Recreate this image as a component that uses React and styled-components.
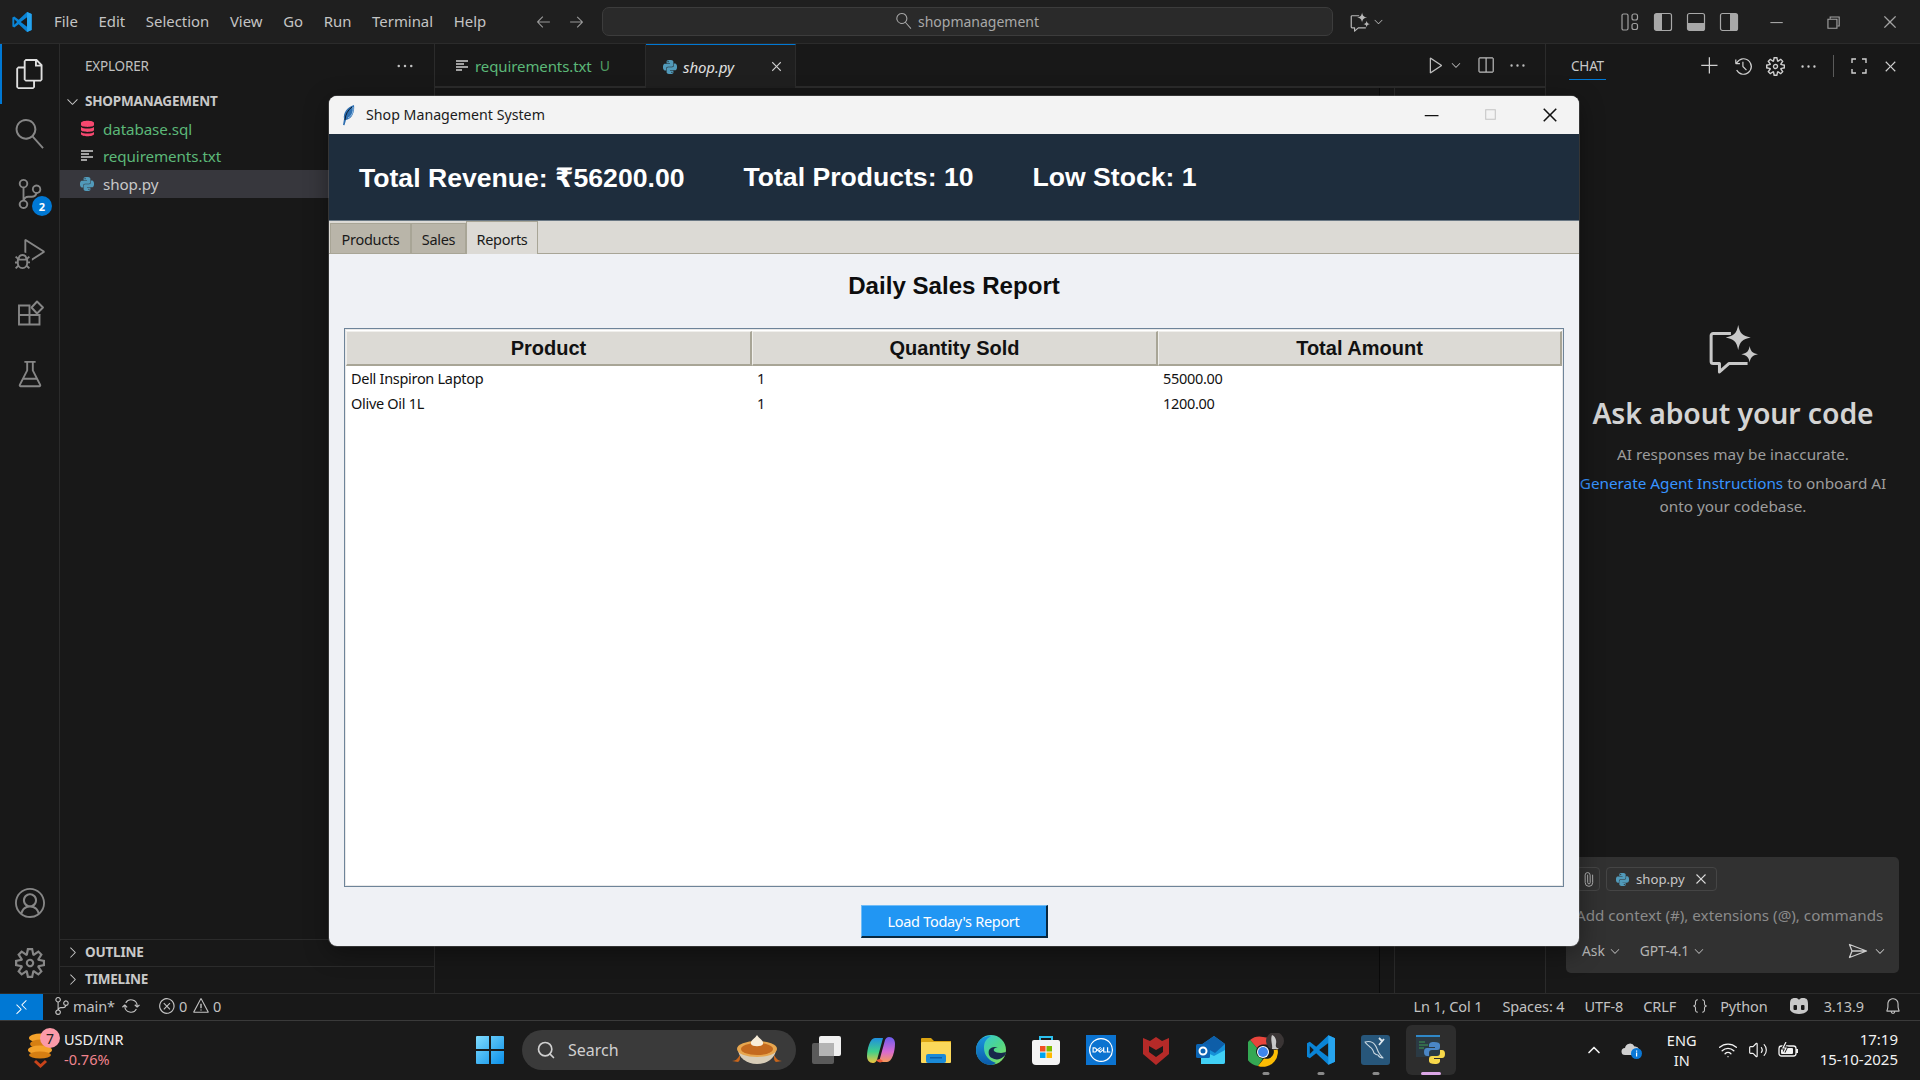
import React from "react";
import styled, { createGlobalStyle } from "styled-components";
import {
  VscFiles, VscSearch, VscSourceControl, VscDebugAlt, VscBeaker, VscAccount, VscSettingsGear,
  VscEllipsis, VscClose, VscChevronDown, VscChevronRight, VscPlay, VscSplitHorizontal, VscAdd, VscHistory,
  VscRemote, VscSync, VscError, VscWarning, VscBell, VscJson, VscArrowLeft, VscArrowRight,
  VscChromeMinimize, VscChromeRestore, VscChromeClose, VscChromeMaximize,
} from "react-icons/vsc";
import { SiPython, SiDell } from "react-icons/si";
import { Paperclip, Search as SearchIcon, ChevronUp, Wifi, Volume2 } from "lucide-react";

const Global = createGlobalStyle`
  html, body { margin: 0; padding: 0; background: #181818; }
  body { font-family: "Noto Sans", "Open Sans", sans-serif; overflow: hidden; }
  * { box-sizing: border-box; }
`;

const Screen = styled.div`
  position: relative; width: 1920px; height: 1080px; display: flex; flex-direction: column;
  background: #181818; color: #cccccc; overflow: hidden;
`;
const Flip = styled.span`display: flex; transform: scaleX(-1);`;

/* ---------- title bar ---------- */
const TitleBar = styled.header`
  height: 44px; flex: none; display: flex; align-items: center; background: #1f1f1f; border-bottom: 1px solid #2b2b2b;
`;
const LogoSlot = styled.div`width: 54px; flex: none; display: flex; justify-content: center; padding-right: 10px;`;
const Menu = styled.nav`width: 481px; flex: none; display: flex; gap: 20.7px; font-size: 14.9px; color: #c4c4c4; padding-bottom: 2px;`;
const NavArrows = styled.div`width: 67px; flex: none; display: flex; gap: 16px; color: #9a9a9a; font-size: 17px;`;
const CommandBox = styled.div`
  width: 731px; height: 29px; flex: none; display: flex; align-items: center; justify-content: center; gap: 6px;
  background: #2a2a2a; border: 1px solid #3c3c3c; border-radius: 7px; color: #a8a8a8; font-size: 14px; padding-bottom: 1px;
`;
const CopilotSlot = styled.div`width: 40px; margin-left: 17px; flex: none; display: flex; align-items: center; gap: 2px; color: #b8b8b8;`;
const Spacer = styled.div`flex: 1;`;
const LayoutIcons = styled.div`display: flex; gap: 13px; margin-right: 28px; color: #a8a8a8;`;
const WinCtl = styled.div`display: flex; gap: 39px; padding-right: 21px; color: #a3a3a3; font-size: 18px; align-items: center;`;

/* ---------- workbench ---------- */
const Workbench = styled.div`flex: 1; display: flex; min-height: 0;`;
const ActivityBar = styled.aside`
  width: 60px; flex: none; display: flex; flex-direction: column; border-right: 1px solid #2b2b2b; background: #181818;
`;
const ActivityItem = styled.div`
  position: relative; height: 60px; display: flex; align-items: center; justify-content: center;
  color: ${p => (p.$active ? "#e0e0e0" : "#868686")}; font-size: 30px;
  border-left: 2px solid ${p => (p.$active ? "#0078d4" : "transparent")}; padding-right: 2px;
`;
const ActivityBottom = styled.div`margin-top: auto;`;
const ScmBadge = styled.span`
  position: absolute; left: 30px; top: 32px; width: 20px; height: 20px; border-radius: 50%; background: #0078d4;
  color: #fff; font-size: 11px; font-weight: 700; display: flex; align-items: center; justify-content: center;
`;

const SideBar = styled.aside`
  width: 375px; flex: none; display: flex; flex-direction: column; background: #181818; border-right: 1px solid #2b2b2b;
`;
const SideHeader = styled.div`
  height: 44px; flex: none; display: flex; align-items: center; justify-content: space-between; padding: 0 19px 0 25px;
  font-size: 13.5px; color: #c0c0c0; letter-spacing: -0.2px;
`;
const Section = styled.div`flex: 1;`;
const SectionHead = styled.div`
  height: 27px; display: flex; align-items: center; gap: 4px; padding-left: 4px; padding-bottom: 2px;
  font-size: 13.5px; font-weight: 700; color: #c8c8c8; letter-spacing: -0.2px;
  border-top: 1px solid ${p => (p.$rule ? "#2b2b2b" : "transparent")};
`;
const FileRow = styled.div`
  height: 27.5px; display: flex; align-items: center; padding-left: 20px; font-size: 15.2px;
  color: ${p => p.$c || "#c8c8c8"}; background: ${p => (p.$sel ? "#37373d" : "transparent")};
  letter-spacing: -0.1px;
`;
const FileIcon = styled.span`width: 23px; flex: none; display: flex; align-items: center; justify-content: flex-start;`;

const Editor = styled.main`
  width: 1110px; flex: none; display: flex; flex-direction: column; background: #171717;
`;
const TabStrip = styled.div`
  height: 44px; flex: none; display: flex; align-items: stretch; background: #181818; border-bottom: 2px solid #2b2b2b;
`;
const EdTab = styled.div`
  display: flex; align-items: center; gap: 6px; width: ${p => p.$w}px; padding-left: ${p => (p.$active ? 17 : 20)}px; font-size: 15px;
  color: ${p => p.$c}; font-style: ${p => (p.$active ? "italic" : "normal")};
  background: ${p => (p.$active ? "#1f1f1f" : "#181818")};
  border-right: 1px solid #2b2b2b;
  border-top: 1px solid ${p => (p.$active ? "#0078d4" : "transparent")};
  margin-bottom: ${p => (p.$active ? "-2px" : "0")};
  letter-spacing: -0.1px;
`;
const TabU = styled.span`margin-left: 2px; font-size: 14px; color: #4f9d62;`;
const TabClose = styled.span`margin-left: auto; margin-right: 10px; color: #d0d0d0; display: flex; font-size: 17px;`;
const EdActions = styled.div`
  margin-left: auto; display: flex; align-items: center; gap: 13px; padding-right: 18px; color: #bdbdbd; font-size: 18px;
`;
const RunGroup = styled.span`display: flex; align-items: center; gap: 3px;`;
const EdBody = styled.div`flex: 1; display: flex; justify-content: flex-end;`;
const MiniMap = styled.div`width: 16px; margin-right: 150px; border-left: 1px solid #0a0a0a; border-right: 1px solid #2a2a2a;`;

const ChatPanel = styled.aside`
  flex: 1; display: flex; flex-direction: column; background: #181818; border-left: 1px solid #2b2b2b; min-width: 0;
`;
const ChatHead = styled.div`
  height: 44px; flex: none; display: flex; align-items: center; padding: 0 20px 0 23px; color: #cfcfcf; font-size: 18px;
`;
const ChatTab = styled.div`
  font-size: 13.5px; color: #c8c8c8; height: 27px; align-self: flex-start; margin-top: 9px; display: flex; align-items: center; padding: 0 2px;
  border-bottom: 1px solid #0078d4; letter-spacing: -0.2px;
`;
const ChatTools = styled.div`margin-left: auto; display: flex; align-items: center; gap: 13.5px;`;
const ToolRule = styled.span`width: 1px; height: 22px; flex: none; background: #5a5a5a; margin: 0 2px;`;
const ChatCenter = styled.div`
  flex: 1; display: flex; flex-direction: column; align-items: center; text-align: center; padding-top: 236px; min-height: 0;
`;
const ChatTitle = styled.h2`margin: 17px 0 0; font-size: 28.4px; font-weight: 600; color: #d4d4d4; line-height: 44px; letter-spacing: -0.1px;`;
const ChatNote = styled.p`margin: 0; font-size: 15.3px; color: #9d9d9d; line-height: 23px;`;
const ChatNoteA = styled(ChatNote)`margin-top: 8px;`;
const ChatNoteB = styled(ChatNote)`margin-top: 6px; width: 330px;`;
const LinkText = styled.span`color: #3794ff;`;

const InputBox = styled.div`
  margin: 0 21px 20px 20px; height: 116px; flex: none; display: flex; flex-direction: column; background: #313131;
  border-radius: 5px; padding: 10px 12px 0 10px; font-size: 14.5px;
`;
const AttachRow = styled.div`display: flex; gap: 6px; align-items: center;`;
const AttachBtn = styled.span`
  width: 24px; height: 24px; border: 1px solid #454545; border-radius: 4px; display: flex; align-items: center; justify-content: center; color: #bbb;
`;
const TiltClip = styled.span`display: flex; transform: rotate(-45deg);`;
const Pill = styled.span`
  height: 24px; width: 111px; display: flex; align-items: center; gap: 7px; padding-left: 9px;
  border: 1px solid #454545; border-radius: 4px; font-size: 13.2px; color: #c8c8c8;
`;
const PillClose = styled.span`display: flex; font-size: 18px; color: #ddd; margin-left: 0;`;
const Placeholder = styled.div`margin-top: 14px; color: #8b8b8b; white-space: nowrap; height: 22px; font-size: 15.2px;`;
const PickRow = styled.div`display: flex; align-items: center; margin-top: 14px; color: #b4b4b4; font-size: 13.8px; padding-left: 6px;`;
const Pick = styled.span`display: flex; align-items: center; gap: 3px; margin-right: 18px;`;
const SendWrap = styled.span`margin-left: auto; display: flex; align-items: center; gap: 5px; color: #cdcdcd;`;

/* ---------- status bar ---------- */
const StatusBar = styled.footer`
  height: 28px; flex: none; display: flex; align-items: center; background: #181818; border-top: 1px solid #2b2b2b;
  border-bottom: 1px solid #3a3a3a; font-size: 14.5px; color: #c2c2c2; letter-spacing: -0.1px;
`;
const RemoteBtn = styled.div`width: 43px; height: 100%; background: #0078d4; color: #fff; display: flex; align-items: center; justify-content: center; font-size: 17px;`;
const StatusLeft = styled.div`display: flex; align-items: center; margin-left: 10px; padding-bottom: 3px;`;
const StatusGroup = styled.span`
  display: flex; align-items: center; gap: ${p => p.$gap || 2}px; margin-right: ${p => p.$mr || 0}px; margin-left: ${p => p.$ml || 0}px;
`;
const StatusRight = styled.div`margin-left: auto; display: flex; align-items: center; gap: 20px; padding: 0 18px 3px 0;`;
const StatusIcon = styled.span`display: flex; font-size: 18px;`;

/* ---------- taskbar ---------- */
const Taskbar = styled.div`
  height: 59px; flex: none; display: flex; align-items: center; background: #1a1a1a; color: #f2f2f2; font-size: 14.5px; padding-bottom: 1px;
`;
const Widget = styled.div`width: 475px; flex: none; display: flex; align-items: center; padding-left: 26px; gap: 4px;`;
const WidgetArt = styled.div`position: relative; width: 34px; height: 46px;`;
const WidgetBadge = styled.span`
  position: absolute; left: 14px; top: 1px; width: 20px; height: 20px; border-radius: 50%; background: #fb9aa8; color: #222;
  font-size: 14px; display: flex; align-items: center; justify-content: center;
`;
const WidgetText = styled.div`line-height: 20px; font-size: 14.5px; padding-bottom: 2px;`;
const Delta = styled.div`color: #f0848e;`;
const TaskSearch = styled.div`
  position: relative; width: 274px; height: 40px; margin-left: 17px; border-radius: 20px; background: #3a3a3a; display: flex; align-items: center;
  padding-left: 14px; gap: 12px; color: #d0d0d0; font-size: 16px; flex: none;
`;
const Pie = styled.span`position: absolute; right: 12px; top: 3px; display: flex;`;
const Apps = styled.div`display: flex; margin-left: 2px;`;
const App_ = styled.div`
  position: relative; width: ${p => (p.$on ? 50 : 55)}px; height: 50px; margin: 0 ${p => (p.$on ? 2.5 : 0)}px;
  display: flex; align-items: center; justify-content: center;
  border-radius: 6px; background: ${p => (p.$on ? "#2d2d2d" : "transparent")};
`;
const RunDot = styled.span`
  position: absolute; bottom: 0; left: 50%; transform: translateX(-50%); height: 3px; border-radius: 2px;
  width: ${p => (p.$on ? 20 : 7)}px; background: ${p => (p.$on ? "#dba6e6" : "#8a8a8a")};
`;
const Tray = styled.div`margin-left: auto; display: flex; align-items: center; padding-right: 22px;`;
const Lang = styled.div`width: 38px; margin: 0 17px 0 20px; text-align: center; line-height: 20px; font-size: 14.5px; padding-bottom: 1px;`;
const TrayIcons = styled.div`display: flex; align-items: center; gap: 10px; margin-right: 20px;`;
const Clock = styled.div`text-align: right; line-height: 20px; font-size: 15px; padding-bottom: 2px;`;
const TrayGap = styled.span`width: 17px;`;

/* ---------- tk window ---------- */
const TkWindow = styled.section`
  position: absolute; left: 329px; top: 96px; width: 1250px; height: 850px; display: flex; flex-direction: column;
  background: #eff1f5; border-radius: 8px; overflow: hidden; box-shadow: 0 0 0 1px #7a7a7a55, 0 6px 24px #0006;
  color: #000;
`;
const TkTitle = styled.div`
  height: 38px; flex: none; display: flex; align-items: center; background: #f3f3f3; padding-left: 12px; gap: 9px; font-size: 14.2px; color: #1b1b1b; padding-bottom: 1px;
`;
const TkCtl = styled.div`margin-left: auto; display: flex; align-items: center; gap: 41px; padding-right: 19px; font-size: 20px; color: #111;`;
const TkCtlOff = styled.span`display: flex; color: #c4c4c4;`;
const TkCtlOn = styled.span`display: flex; width: 20px; justify-content: center;`;
const Stats = styled.div`
  height: 87px; flex: none; display: flex; align-items: center; gap: 59px; padding: 1px 0 0 30px; background: #1e2d3d; color: #fff;
  font-family: "Liberation Sans", "DejaVu Sans", sans-serif; font-weight: 700; font-size: 26.6px; border-bottom: 1px solid #6a7884;
`;
const NotebookTabs = styled.div`
  height: 33px; flex: none; display: flex; align-items: flex-end; background: #dcdad5; border-bottom: 1px solid #a8a596; padding-left: 1px;
`;
const NbTab = styled.div`
  height: ${p => (p.$on ? 33 : 30)}px; width: ${p => p.$w}px; display: flex; align-items: center; justify-content: center;
  font-size: 14.5px; color: #1a1a1a; letter-spacing: -0.3px; padding-top: ${p => (p.$on ? 2 : 0)}px;
  background: ${p => (p.$on ? "#dcdad5" : "#b9b5a9")};
  border: 1px solid #a8a596; border-bottom: none; margin-bottom: ${p => (p.$on ? "-1px" : "0")};
`;
const TkBody = styled.div`
  flex: 1; display: flex; flex-direction: column; padding: 0 15px; min-height: 0;
`;
const Heading = styled.h1`
  margin: 0; height: 74px; flex: none; display: flex; align-items: center; justify-content: center;
  font-family: "Liberation Sans", sans-serif; font-weight: 700; font-size: 24.1px; color: #0d0d0d; padding-bottom: 10px;
`;
const Tree = styled.div`
  height: 559px; flex: none; background: #fff; border: 1px solid #6e8499; box-shadow: inset 0 0 0 1px #e8e8e8;
  padding: 2px 1px; display: flex; flex-direction: column;
`;
const TreeHead = styled.div`display: grid; grid-template-columns: 406px 406px 1fr; height: 35px; flex: none;`;
const HeadCell = styled.div`
  display: flex; align-items: center; justify-content: center; background: #dcdad5;
  border-right: 2px solid #a8a596; border-bottom: 2px solid #a8a596; border-top: 1px solid #f0efec; border-left: 1px solid #f0efec;
  font-family: "Liberation Sans", sans-serif; font-weight: 700; font-size: 20px; color: #111;
`;
const TreeRow = styled.div`
  display: grid; grid-template-columns: 406px 406px 1fr; height: 24.5px; align-items: center; font-size: 14.5px; line-height: 20px; color: #111; letter-spacing: -0.3px;
`;
const RowCell = styled.div`padding-left: 5px;`;
const TkFoot = styled.div`flex: 1; display: flex; justify-content: center; padding-top: 18px;`;
const LoadBtn = styled.div`
  width: 187px; height: 33px; display: flex; align-items: center; justify-content: center; background: #2196f3; color: #fff;
  font-size: 14.5px; letter-spacing: -0.3px; border: 1px solid #6fbcf7; border-right: 2px solid #08283f; border-bottom: 2px solid #08283f;
`;

const Svg = ({ w, h = w, vb, children }) => <svg width={w} height={h} viewBox={vb || `0 0 ${w} ${h}`} fill="none">{children}</svg>;

const VSLogo = ({ s = 20 }) => (
  <Svg w={s} vb="0 0 24 24">
    <path d="M17.5 1 8.4 9.6 3.6 5.9 1.5 7v10l2.1 1.1 4.8-3.7L17.5 23l5-2.2V3.2L17.5 1Z" fill="#0a84d6" />
    <path d="M17.5 6.8 10.6 12l6.9 5.2V6.8ZM3.6 9v6l3-3-3-3Z" fill="#1a1a1a" />
    <path d="M17.5 1l5 2.2v17.6l-5 2.2V1Z" fill="#27a4ee" />
  </Svg>
);
const LinesIcon = () => (
  <Svg w={14} vb="0 0 14 14">
    <path d="M1 2h12M1 5h8M1 8h12M1 11h6" stroke="#d0d0d0" strokeWidth="1.4" />
  </Svg>
);
const DbIcon = () => (
  <Svg w={15} h={17} vb="0 0 15 17">
    <path d="M1 3c0-3 13-3 13 0v2c0 2.500-13 2.500-13 0Z" fill="#f5486f" />
    <path d="M1 7c2.500 2 10.500 2 13 0v3c0 2.500-13 2.500-13 0Z" fill="#f5486f" />
    <path d="M1 12c2.500 2 10.500 2 13 0v2c0 3-13 3-13 0Z" fill="#f5486f" />
  </Svg>
);
const ExtensionsIcon = () => (
  <Svg w={30} vb="0 0 30 30">
    <path d="M4 6.500h10.500V25.500H4ZM4 16h20.500v9.500H14.500" stroke="currentColor" strokeWidth="1.900" />
    <path d="M24.500 16v-.5" stroke="currentColor" strokeWidth="1.900" />
    <path d="M22 2.500 28 8.500 22 14.500 16.500 8.500Z" stroke="currentColor" strokeWidth="1.900" strokeLinejoin="round" />
  </Svg>
);
const CornersIcon = () => (
  <Svg w={18} vb="0 0 18 18">
    <path d="M2 6V2h4M12 2h4v4M16 12v4h-4M6 16H2v-4" stroke="#cfcfcf" strokeWidth="1.400" />
  </Svg>
);
const Half = ({ side }) => {
  const fill = { left: "M2 2h7v16H2z", bottom: "M2 11h16v7H2z", right: "M11 2h7v16h-7z" }[side];
  return (
    <Svg w={20} vb="0 0 20 20">
      <rect x="1.5" y="1.5" width="17" height="17" rx="2" stroke="#a8a8a8" strokeWidth="1.2" />
      <path d={fill} fill="#a8a8a8" />
    </Svg>
  );
};
const Customize = () => (
  <Svg w={20} vb="0 0 20 20">
    <rect x="2" y="2" width="6" height="16" rx="1.5" stroke="#a0a0a0" strokeWidth="1.2" />
    <rect x="12" y="2" width="5.5" height="6" rx="2" stroke="#a0a0a0" strokeWidth="1.2" />
    <rect x="12" y="11.5" width="5.5" height="6" rx="2" stroke="#a0a0a0" strokeWidth="1.2" />
  </Svg>
);
const ChatSpark = ({ s = 20, c = "#b8b8b8", sw = 1.2 }) => (
  <Svg w={s} vb="0 0 48 46">
    <path d="M22 8H5a2 2 0 0 0-2 2v25a2 2 0 0 0 2 2h6v8l9-8h18" stroke={c} strokeWidth={sw * 2.4} strokeLinejoin="round" />
    <path d="M29 0c1.500 8 4 10.500 12 12-8 1.500-10.500 4-12 12-1.500-8-4-10.500-12-12 8-1.500 10.500-4 12-12Z" fill={c} />
    <path d="M40 20c.8 5 2.500 6.800 8 8-5.500 1.200-7.200 3-8 8-.8-5-2.500-6.800-8-8 5.500-1.200 7.200-3 8-8Z" fill={c} />
  </Svg>
);
const Feather = () => (
  <Svg w={16} h={22} vb="0 0 16 22">
    <path d="M13 1C6 3 2 9 3 15l-1 6 1.500.3L5 16c6-1 9-8 8-15Z" fill="#2f6fb0" />
    <path d="M11 3C7 6 4.500 10 4 16" stroke="#0e1e30" strokeWidth="1" />
    <path d="M12 3c.5 5-1 9-5 11" stroke="#9ec6ea" strokeWidth="1" />
  </Svg>
);
const CopilotMini = () => (
  <Svg w={22} h={18} vb="0 0 22 18">
    <path d="M2 7c0-4 1-6 5-6 2 0 3.300.6 4 2 .7-1.400 2-2 4-2 4 0 5 2 5 6v6c-2 3-6 4-9 4s-7-1-9-4V7Z" fill="#c8c8c8" />
    <rect x="5.500" y="8" width="3.500" height="5" rx="1" fill="#181818" />
    <rect x="13" y="8" width="3.500" height="5" rx="1" fill="#181818" />
  </Svg>
);
const Send = () => (
  <Svg w={20} h={16} vb="0 0 20 16">
    <path d="M1.500 1.500 18.500 8 1.500 14.500 4 8 1.500 1.500ZM4 8h14" stroke="#cdcdcd" strokeWidth="1.300" strokeLinejoin="round" />
  </Svg>
);
const Battery = () => (
  <Svg w={22} h={16} vb="0 0 22 16">
    <rect x="1" y="4" width="17" height="10" rx="2.500" stroke="#f2f2f2" strokeWidth="1.300" />
    <rect x="3" y="6" width="12" height="6" rx="1" fill="#f2f2f2" />
    <path d="M19 7v4" stroke="#f2f2f2" strokeWidth="2" />
    <path d="M8 0 5 6h3l-2 4" stroke="#1a1a1a" strokeWidth="3" />
    <path d="M8 0 5 6h3l-2 4" stroke="#f2f2f2" strokeWidth="1.200" />
  </Svg>
);
const CloudInfo = () => (
  <Svg w={22} h={18} vb="0 0 22 18">
    <path d="M4 14a3.500 3.500 0 0 1 0-7 5 5 0 0 1 9.500-1.500A4 4 0 0 1 16 13l-2 1H4Z" fill="#cfcfcf" />
    <circle cx="15.500" cy="12.500" r="5.500" fill="#0a78d6" />
    <rect x="15" y="11.500" width="1.200" height="4" fill="#fff" />
    <rect x="15" y="9.500" width="1.200" height="1.200" fill="#fff" />
  </Svg>
);
const Coins = () => (
  <svg width="30" height="42" viewBox="0 0 30 42" fill="none">
    <ellipse cx="15" cy="11" rx="12" ry="4.500" fill="#f4a22b" />
    <ellipse cx="15" cy="17" rx="11" ry="4.500" fill="#d67f12" />
    <ellipse cx="14" cy="23" rx="12" ry="4.500" fill="#f4a22b" />
    <ellipse cx="14" cy="28" rx="11" ry="3.500" fill="#d67f12" />
    <path d="M9 34l5.500 5L20 34" stroke="#c8431a" strokeWidth="3" />
  </svg>
);
const PieArt = () => (
  <svg width="54" height="34" viewBox="0 0 54 34" fill="none">
    <path d="M2 28c4 0 6-3 8-6 0 4 0 6-2 7ZM52 28c-4 0-6-3-8-6 0 4 0 6 2 7Z" fill="#c9651b" />
    <path d="M8 16c0 8 8 15 19 15s19-7 19-15H8Z" fill="#d8cdb8" />
    <ellipse cx="27" cy="16" rx="20" ry="8" fill="#e7a64f" />
    <ellipse cx="27" cy="16" rx="16" ry="6" fill="#c46a1f" />
    <path d="M27 2c2 4 7 5 6 9-1 3-11 3-12 0-1-4 4-5 6-9Z" fill="#f7ecd8" />
  </svg>
);
const WinLogo = () => (
  <svg width="30" height="30" viewBox="0 0 30 30">
    <defs><linearGradient id="wl" x1="0" y1="0" x2="1" y2="1"><stop offset="0" stopColor="#7fdcff" /><stop offset="1" stopColor="#0a8fe8" /></linearGradient></defs>
    <path d="M1 2a1 1 0 0 1 1-1h12v13H1zM16 1h12a1 1 0 0 1 1 1v12H16zM1 16h13v13H2a1 1 0 0 1-1-1zM16 16h13v12a1 1 0 0 1-1 1H16z" fill="url(#wl)" />
  </svg>
);
const TaskView = () => (
  <Svg w={32} vb="0 0 32 32">
    <rect x="2" y="9" width="22" height="21" rx="2" fill="#5a5a5a" />
    <rect x="9" y="2" width="22" height="20" rx="2" fill="#f0f0f0" />
    <rect x="9" y="9" width="15" height="13" fill="#b4b4b4" />
  </Svg>
);
const CopilotApp = () => (
  <svg width="30" height="30" viewBox="0 0 30 30" fill="none">
    <defs>
      <linearGradient id="c1" x1="0" y1="0" x2="0" y2="1"><stop offset="0" stopColor="#1f8fe0" /><stop offset=".55" stopColor="#3fd08a" /><stop offset="1" stopColor="#f2c53c" /></linearGradient>
      <linearGradient id="c2" x1="0" y1="0" x2="0" y2="1"><stop offset="0" stopColor="#6b5cf0" /><stop offset=".6" stopColor="#d96bd0" /><stop offset="1" stopColor="#f59a5a" /></linearGradient>
    </defs>
    <path d="M9 3h8l-6 22c-.5 1.500-2 3-4 3-4 0-6-3-6-7 0-7 3-18 8-18Z" fill="url(#c1)" />
    <path d="M21 27h-8l6-22c.5-1.500 2-3 4-3 4 0 6 3 6 7 0 7-3 18-8 18Z" fill="url(#c2)" />
    <path d="M10 25c2 3 6 3 7 1l-3-2-4 1Z" fill="#ee5a3a" />
  </svg>
);
const FolderApp = () => (
  <Svg w={30} vb="0 0 30 30">
    <path d="M0 4a1 1 0 0 1 1-1h9l3 3h17v4H0Z" fill="#dba412" />
    <rect y="7" width="30" height="21" rx="1" fill="#fbd85a" />
    <rect x="5" y="19" width="20" height="9" rx="2" fill="#1a8ad8" />
    <rect x="9" y="22" width="12" height="1.500" fill="#0b5fa8" />
  </Svg>
);
const EdgeApp = () => (
  <svg width="30" height="30" viewBox="0 0 30 30" fill="none">
    <defs>
      <linearGradient id="e1" x1="0" y1="0" x2="1" y2="1"><stop offset="0" stopColor="#2fc4e8" /><stop offset=".55" stopColor="#4fd68a" /><stop offset="1" stopColor="#8fe05a" /></linearGradient>
      <linearGradient id="e2" x1="0" y1="0" x2="0" y2="1"><stop offset="0" stopColor="#1a96de" /><stop offset="1" stopColor="#0b5aa8" /></linearGradient>
    </defs>
    <circle cx="15" cy="15" r="15" fill="url(#e1)" />
    <path d="M0 15C0 7 6 1 15 1c-5 3-7 6-7 12 0 8 6 13 12 15-2 1-3 2-5 2C7 30 0 24 0 15Z" fill="url(#e2)" />
    <path d="M30 17c0 2-1 4-3 5-3 3-8 3-11 1-3-1-4-5-3-8 2-3 6-4 9-2-3-1-5 1-4 3 1 1 4 2 7 2 2 0 4-1 5-1Z" fill="#17294a" />
  </svg>
);
const StoreApp = () => (
  <Svg w={30} vb="0 0 30 30">
    <path d="M9 6V2h12v4" stroke="#2cc0ee" strokeWidth="2" />
    <path d="M1 7a2 2 0 0 1 2-2h24a2 2 0 0 1 2 2v19a4 4 0 0 1-4 4H5a4 4 0 0 1-4-4Z" fill="#f4f4f4" />
    <rect x="9" y="11" width="5.500" height="5.500" fill="#f25022" />
    <rect x="15.500" y="11" width="5.500" height="5.500" fill="#7fba00" />
    <rect x="9" y="17.500" width="5.500" height="5.500" fill="#00a4ef" />
    <rect x="15.500" y="17.500" width="5.500" height="5.500" fill="#ffb900" />
  </Svg>
);
const DellTile = styled.span`width: 30px; height: 30px; display: flex; align-items: center; justify-content: center; background: #0b73d0; color: #fff;`;
const McAfee = () => (
  <Svg w={26} h={30} vb="0 0 26 30">
    <path d="M0 3 7 6 13 2 19 6 26 3V19L13 30 0 19Z" fill="#b52a28" />
    <path d="M6 11 13 15 20 11V17L13 22 6 17Z" fill="#1a1a1a" />
  </Svg>
);
const Outlook = () => (
  <Svg w={30} vb="0 0 30 30">
    <path d="M5 10 18 1l11 8v18a2 2 0 0 1-2 2H5Z" fill="#1590d8" />
    <path d="M18 1l11 8-10 9-14-8Z" fill="#0e5ea8" />
    <path d="M5 15l13 6 11-6v12a2 2 0 0 1-2 2H5Z" fill="#41d0f5" />
    <rect y="9" width="14" height="14" rx="1.500" fill="#0a64b4" />
    <circle cx="7" cy="16" r="3.500" stroke="#fff" strokeWidth="2" />
  </Svg>
);
const Chrome = () => (
  <svg width="36" height="34" viewBox="0 0 36 34" fill="none">
    <path d="M15 4A15 15 0 0 1 28 11.500H15a7 7 0 0 0-6 3.500L2 7A15 15 0 0 1 15 4Z" fill="#e8453c" />
    <path d="M2 7l7 8a7 7 0 0 0 6 10.500L10 33A15 15 0 0 1 2 7Z" fill="#34a853" />
    <path d="M28 11.500A15 15 0 0 1 10 33l6-7.600a7 7 0 0 0 5-13.900Z" fill="#fbbc04" />
    <circle cx="15" cy="19" r="6" fill="#fff" />
    <circle cx="15" cy="19" r="5" fill="#3f86ee" />
    <circle cx="27" cy="8" r="9" fill="#3a3535" />
    <path d="M24 2c3 1 5 5 4 9s2 4 3 5h-7c1-4-2-9 0-14Z" fill="#c9c9c9" />
  </svg>
);
const MySqlApp = () => (
  <Svg w={29} h={30} vb="0 0 29 30">
    <rect width="29" height="30" rx="3" fill="#27567a" />
    <path d="M4 7c4-1 8 0 10 3 2 2 2 5 4 8 1 2 2 3 4 5-2 0-4-1-5-3-2 0-3-1-4-2-1-3-2-5-4-6-2-2-4-3-5-5Z" stroke="#c7d6e0" strokeWidth="1.100" strokeLinejoin="round" />
    <path d="M18 3l3 3M23 4l-5 6" stroke="#dfe8ee" strokeWidth="1.800" />
  </Svg>
);
const PyApp = () => (
  <svg width="30" height="30" viewBox="0 0 30 30" fill="none">
    <rect x="0" y="0" width="24" height="22" fill="#2b3a44" />
    <rect x="0" y="0" width="24" height="2" fill="#2f88c8" />
    <path d="M3 7h6M3 10h9M3 13h5" stroke="#3f9b54" strokeWidth="1" />
    <path d="M18 7c-4 0-5 1.500-5 3v2h6v1h-8c-2 0-3 1.500-3 4s1 4 3 4h2v-3c0-2 1-3 3-3h5c2 0 3-1 3-3v-2c0-2-2-3-6-3Z" fill="#4a86c6" />
    <path d="M19 29c4 0 5-1.500 5-3v-2h-6v-1h8c2 0 3-1.500 3-4s-1-4-3-4h-2v3c0 2-1 3-3 3h-5c-2 0-3 1-3 3v2c0 2 2 3 6 3Z" fill="#f7d84a" />
  </svg>
);

const apps = [
  [<TaskView />], [<CopilotApp />], [<FolderApp />], [<EdgeApp />], [<StoreApp />],
  [<DellTile><SiDell size={24} /></DellTile>], [<McAfee />], [<Outlook />],
  [<Chrome />, "dot"], [<VSLogo s={32} />, "dot"], [<MySqlApp />, "dot"], [<PyApp />, "on"],
];
const menu = ["File", "Edit", "Selection", "View", "Go", "Run", "Terminal", "Help"];
const rows = [["Dell Inspiron Laptop", "1", "55000.00"], ["Olive Oil 1L", "1", "1200.00"]];

export default function App() {
  return (
    <Screen>
      <Global />
      <TitleBar>
        <LogoSlot><VSLogo s={22} /></LogoSlot>
        <Menu>{menu.map(m => <span key={m}>{m}</span>)}</Menu>
        <NavArrows><VscArrowLeft /><VscArrowRight /></NavArrows>
        <CommandBox><Flip><VscSearch size={16} /></Flip>shopmanagement</CommandBox>
        <CopilotSlot><ChatSpark s={20} /><VscChevronDown size={13} /></CopilotSlot>
        <Spacer />
        <LayoutIcons><Customize /><Half side="left" /><Half side="bottom" /><Half side="right" /></LayoutIcons>
        <WinCtl><VscChromeMinimize /><VscChromeRestore /><VscChromeClose /></WinCtl>
      </TitleBar>

      <Workbench>
        <ActivityBar>
          <ActivityItem $active><VscFiles /></ActivityItem>
          <ActivityItem><Flip><VscSearch /></Flip></ActivityItem>
          <ActivityItem><VscSourceControl /><ScmBadge>2</ScmBadge></ActivityItem>
          <ActivityItem><VscDebugAlt /></ActivityItem>
          <ActivityItem><ExtensionsIcon /></ActivityItem>
          <ActivityItem><VscBeaker /></ActivityItem>
          <ActivityBottom>
            <ActivityItem><VscAccount /></ActivityItem>
            <ActivityItem><VscSettingsGear /></ActivityItem>
          </ActivityBottom>
        </ActivityBar>

        <SideBar>
          <SideHeader>EXPLORER<VscEllipsis size={20} /></SideHeader>
          <Section>
            <SectionHead><VscChevronDown size={17} />SHOPMANAGEMENT</SectionHead>
            <FileRow $c="#5cb878"><FileIcon><DbIcon /></FileIcon>database.sql</FileRow>
            <FileRow $c="#5cb878"><FileIcon><LinesIcon /></FileIcon>requirements.txt</FileRow>
            <FileRow $sel><FileIcon><SiPython size={14} color="#519aba" /></FileIcon>shop.py</FileRow>
          </Section>
          <SectionHead $rule><VscChevronRight size={17} />OUTLINE</SectionHead>
          <SectionHead $rule><VscChevronRight size={17} />TIMELINE</SectionHead>
        </SideBar>

        <Editor>
          <TabStrip>
            <EdTab $w={211} $c="#5cb878"><LinesIcon />requirements.txt<TabU>U</TabU></EdTab>
            <EdTab $w={150} $active $c="#e0e0e0"><SiPython size={14} color="#519aba" />shop.py<TabClose><VscClose /></TabClose></EdTab>
            <EdActions><RunGroup><VscPlay size={20} /><VscChevronDown size={14} /></RunGroup><VscSplitHorizontal size={19} /><VscEllipsis size={19} /></EdActions>
          </TabStrip>
          <EdBody><MiniMap /></EdBody>
        </Editor>

        <ChatPanel>
          <ChatHead>
            <ChatTab>CHAT</ChatTab>
            <ChatTools>
              <VscAdd size={20} /><VscHistory size={19} /><VscSettingsGear size={19} /><VscEllipsis size={19} /><ToolRule /><CornersIcon /><VscClose size={19} />
            </ChatTools>
          </ChatHead>
          <ChatCenter>
            <ChatSpark s={50} c="#c8c8c8" />
            <ChatTitle>Ask about your code</ChatTitle>
            <ChatNoteA>AI responses may be inaccurate.</ChatNoteA>
            <ChatNoteB><LinkText>Generate Agent Instructions</LinkText> to onboard AI onto your codebase.</ChatNoteB>
          </ChatCenter>
          <InputBox>
            <AttachRow>
              <AttachBtn><TiltClip><Paperclip size={15} strokeWidth={1.4} /></TiltClip></AttachBtn>
              <Pill><SiPython size={13} color="#519aba" />shop.py<PillClose><VscClose /></PillClose></Pill>
            </AttachRow>
            <Placeholder>Add context (#), extensions (@), commands</Placeholder>
            <PickRow>
              <Pick>Ask<VscChevronDown size={14} /></Pick>
              <Pick>GPT-4.1<VscChevronDown size={14} /></Pick>
              <SendWrap><Send /><VscChevronDown size={14} /></SendWrap>
            </PickRow>
          </InputBox>
        </ChatPanel>
      </Workbench>

      <StatusBar>
        <RemoteBtn><VscRemote /></RemoteBtn>
        <StatusLeft>
          <StatusGroup $mr={7} $gap={2}><StatusIcon><VscSourceControl /></StatusIcon>main*</StatusGroup>
          <StatusGroup $mr={18}><StatusIcon><VscSync /></StatusIcon></StatusGroup>
          <StatusGroup $mr={5} $gap={3}><StatusIcon><VscError /></StatusIcon>0</StatusGroup>
          <StatusGroup $gap={3}><StatusIcon><VscWarning /></StatusIcon>0</StatusGroup>
        </StatusLeft>
        <StatusRight>
          <span>Ln 1, Col 1</span>
          <span>Spaces: 4</span>
          <span>UTF-8</span>
          <span>CRLF</span>
          <StatusGroup $gap={11} $ml={-5}><StatusIcon><VscJson /></StatusIcon>Python</StatusGroup>
          <StatusGroup $mr={-6}><CopilotMini /></StatusGroup>
          <span>3.13.9</span>
          <StatusIcon><VscBell /></StatusIcon>
        </StatusRight>
      </StatusBar>

      <Taskbar>
        <Widget>
          <WidgetArt><Coins /><WidgetBadge>7</WidgetBadge></WidgetArt>
          <WidgetText>USD/INR<Delta>-0.76%</Delta></WidgetText>
        </Widget>
        <WinLogo />
        <TaskSearch><SearchIcon size={20} strokeWidth={2} />Search<Pie><PieArt /></Pie></TaskSearch>
        <Apps>
          {apps.map(([icon, state], i) => (
            <App_ key={i} $on={state === "on"}>{icon}{state && <RunDot $on={state === "on"} />}</App_>
          ))}
        </Apps>
        <Tray>
          <ChevronUp size={20} />
          <TrayGap />
          <CloudInfo />
          <Lang>ENG<br />IN</Lang>
          <TrayIcons><Wifi size={20} strokeWidth={1.6} /><Volume2 size={20} strokeWidth={1.4} /><Battery /></TrayIcons>
          <Clock>17:19<br />15-10-2025</Clock>
        </Tray>
      </Taskbar>

      <TkWindow>
        <TkTitle>
          <Feather />Shop Management System
          <TkCtl>
            <VscChromeMinimize />
            <TkCtlOff><VscChromeMaximize size={17} /></TkCtlOff>
            <TkCtlOn><VscChromeClose /></TkCtlOn>
          </TkCtl>
        </TkTitle>
        <Stats><span>Total Revenue: ₹56200.00</span><span>Total Products: 10</span><span>Low Stock: 1</span></Stats>
        <NotebookTabs>
          <NbTab $w={81}>Products</NbTab>
          <NbTab $w={55}>Sales</NbTab>
          <NbTab $w={72} $on>Reports</NbTab>
        </NotebookTabs>
        <TkBody>
          <Heading>Daily Sales Report</Heading>
          <Tree>
            <TreeHead>
              <HeadCell>Product</HeadCell><HeadCell>Quantity Sold</HeadCell><HeadCell>Total Amount</HeadCell>
            </TreeHead>
            {rows.map(r => (
              <TreeRow key={r[0]}>{r.map((c, i) => <RowCell key={i}>{c}</RowCell>)}</TreeRow>
            ))}
          </Tree>
          <TkFoot><LoadBtn>Load Today's Report</LoadBtn></TkFoot>
        </TkBody>
      </TkWindow>
    </Screen>
  );
}
